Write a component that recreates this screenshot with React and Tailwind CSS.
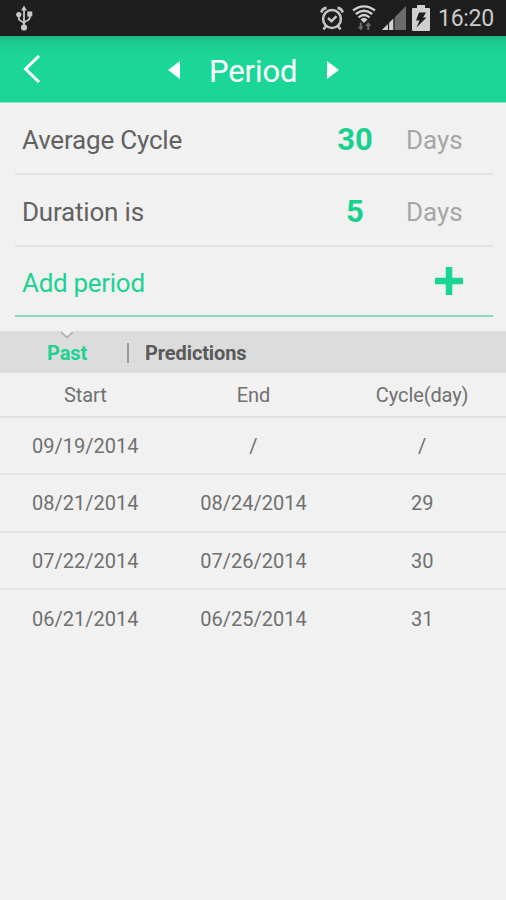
const records = [
  { start: "09/19/2014", end: "/", cycle: "/" },
  { start: "08/21/2014", end: "08/24/2014", cycle: "29" },
  { start: "07/22/2014", end: "07/26/2014", cycle: "30" },
  { start: "06/21/2014", end: "06/25/2014", cycle: "31" },
];

function UsbIcon() {
  return (
    <svg className="h-7 w-5" viewBox="0 0 20 28" fill="none" stroke="#c9c9c9" strokeWidth="1.8">
      <path d="M10 4v20M4.800 11v3.500c0 3 5.200 2.500 5.200 5.500M15.700 10v4c0 3-5.700 2.500-5.700 5.500" />
      <path d="M10 1.500l3 5H7z" fill="#c9c9c9" stroke="none" />
      <circle cx="4.800" cy="10.500" r="2.600" fill="#c9c9c9" stroke="none" />
      <path d="M13.300 7.500h5v5h-5z" fill="#c9c9c9" stroke="none" />
      <circle cx="10" cy="23.500" r="3.100" fill="#c9c9c9" stroke="none" />
    </svg>
  );
}

function AlarmIcon() {
  return (
    <svg className="h-6 w-6" viewBox="0 0 24 24" fill="none" stroke="#c6c6c6" strokeWidth="2.500">
      <circle cx="12" cy="13" r="8.900" />
      <path d="M8 12l3.500 3.200 5-5M6 20l-2.500 3.500M18 20l2.500 3.500" />
      <path d="M1.500 6.500A5 5 0 0 1 6.500 2M22.500 6.500A5 5 0 0 0 17.500 2" strokeWidth="2.800" />
    </svg>
  );
}

function WifiIcon() {
  return (
    <svg className="h-[26px] w-6" viewBox="0 0 24 26" fill="none" stroke="#cfcfcf" strokeWidth="2.300">
      <path d="M1 5.500Q12-2.800 23 5.500M3.800 9Q12 2.400 20.200 9M6.500 12.500Q12 7.500 17.500 12.500" />
      <path d="M8.500 14.500Q12 11 15.500 14.500L12 18z" fill="#cfcfcf" stroke="none" />
      <g fill="#6c6c6c" stroke="none">
        <path d="M7.800 17.500h2v4h2l-3 4-3-4h2z" />
        <path d="M17.200 25h-2v-4h-2l3-4 3 4h-2z" />
      </g>
    </svg>
  );
}

function SignalIcon() {
  return (
    <svg className="h-6 w-6" viewBox="0 0 24 24">
      <path d="M0 24L24 0v24z" fill="#6c6c6c" />
      <path d="M0 24L11.500 12.500V24z" fill="#d2d2d2" />
      <path d="M6.500 16v8M12 11v13" stroke="#1e1e1e" strokeWidth="1.200" />
    </svg>
  );
}

function BatteryIcon() {
  return (
    <svg className="h-[26px] w-[18px]" viewBox="0 0 18 26">
      <path d="M5 0h8v3h4q1 0 1 1v21q0 1-1 1H1q-1 0-1-1V4q0-1 1-1h4z" fill="#d0d0d0" />
      <path d="M7 7.500h7l-3 5h3.500L4.500 22.500l3-7H4z" fill="#1e1e1e" />
    </svg>
  );
}

function StatusBar() {
  return (
    <div className="flex h-9 items-center bg-[#1e1e1e] pr-3 pl-3.5">
      <UsbIcon />
      <div className="ml-auto flex items-center">
        <AlarmIcon />
        <div className="ml-2 flex"><WifiIcon /></div>
        <div className="ml-1.5 flex"><SignalIcon /></div>
        <div className="mr-2 ml-1.5 flex"><BatteryIcon /></div>
        <span className="w-[56px] pt-0.5 text-[23px] leading-[34px] tracking-[-0.3px] whitespace-nowrap text-[#cbcbcb]">16:20</span>
      </div>
    </div>
  );
}

function TitleBar() {
  return (
    <header className="flex h-[67px] items-center border-b border-[#8ee6c4] bg-linear-to-b from-[#1dba82] from-0% via-[#1bd092] via-15% to-[#1bd797] to-35% pt-0.5 text-white">
      <svg className="mb-0.5 ml-[23px] h-7 w-[18px]" viewBox="0 0 18 28" fill="none" stroke="currentColor" strokeWidth="3">
        <path d="M16 1L2.500 14 16 27" />
      </svg>
      <svg className="ml-[127px] h-[18px] w-3" viewBox="0 0 12 18" fill="currentColor"><path d="M12 0v18L0 9z" /></svg>
      <h1 className="ml-[29px] w-[89px] pt-[3px] text-[31px] leading-[62px] tracking-[-0.1px] whitespace-nowrap">Period</h1>
      <svg className="ml-[29px] h-[18px] w-3" viewBox="0 0 12 18" fill="currentColor"><path d="M0 0v18l12-9z" /></svg>
    </header>
  );
}

function SettingRow({ label, value }) {
  return (
    <div className="flex h-[72px] items-center border-b-2 border-[#e2e2e2] pt-1 pl-[7px]">
      <span className="text-[26px] tracking-[-0.2px] text-[#626262]">{label}</span>
      <span className="ml-auto w-20 pt-px text-center text-[31px] font-bold text-[#19d18f]">{value}</span>
      <span className="ml-[11px] w-[87px] text-[26px] text-[#a6a6a6]">Days</span>
    </div>
  );
}

export default function App() {
  return (
    <div className="h-[900px] w-[506px] overflow-hidden bg-[#f1f1f1] font-[Roboto,sans-serif]">
      <StatusBar />
      <TitleBar />
      <section className="mr-[13px] ml-[15px]">
        <SettingRow label="Average Cycle" value="30" />
        <SettingRow label="Duration is" value="5" />
        <div className="flex h-[70px] items-center border-b-2 border-[#8cd9b9] pr-[30px] pl-[7px]">
          <span className="pt-1 text-[26px] tracking-[-0.3px] text-[#1dd292]">Add period</span>
          <svg className="ml-auto size-7" viewBox="0 0 28 28" stroke="#19d592" strokeWidth="6.500">
            <path d="M14 0v28M0 14h28" />
          </svg>
        </div>
      </section>
      <nav className="relative mt-3.5 flex h-[42px] items-center bg-[#dcdcdc] text-[20px] font-bold">
        <svg className="absolute top-0 left-[59px] h-2.5 w-4" viewBox="0 0 16 10">
          <path d="M1 0l7 6 7-6z" fill="#f1f1f1" />
          <path d="M2 1L8 6.500 14 1" fill="none" stroke="#b4b4b0" strokeWidth="1.800" />
        </svg>
        <span className="ml-[47px] w-[80px] pt-0.5 tracking-[-0.1px] text-[#1dd292]">Past</span>
        <span className="mt-0.5 h-5 w-0.5 bg-[#9a9a9a]" />
        <span className="ml-4 pt-0.5 tracking-[-0.1px] text-[#5a5a5a]">Predictions</span>
      </nav>
      <table className="w-full table-fixed text-center text-[20px] leading-6 text-[#707070]">
        <thead>
          <tr className="h-[43.500px] border-b-2 border-[#e1e1e1]">
            <th className="pt-0.5 pl-0.5 font-normal tracking-[-0.1px]">Start</th>
            <th className="pt-0.5 pl-px font-normal tracking-[-0.1px]">End</th>
            <th className="pt-0.5 pl-px font-normal tracking-[-0.1px]">Cycle(day)</th>
          </tr>
        </thead>
        <tbody>
          {records.map((r) => (
            <tr key={r.start} className="h-[57.600px] border-b-2 border-[#e4e4e4] last:border-b-0">
              <td className="pt-px pl-0.5">{r.start}</td>
              <td className="pt-px pl-px">{r.end}</td>
              <td className="pt-px pl-px">{r.cycle}</td>
            </tr>
          ))}
        </tbody>
      </table>
    </div>
  );
}
